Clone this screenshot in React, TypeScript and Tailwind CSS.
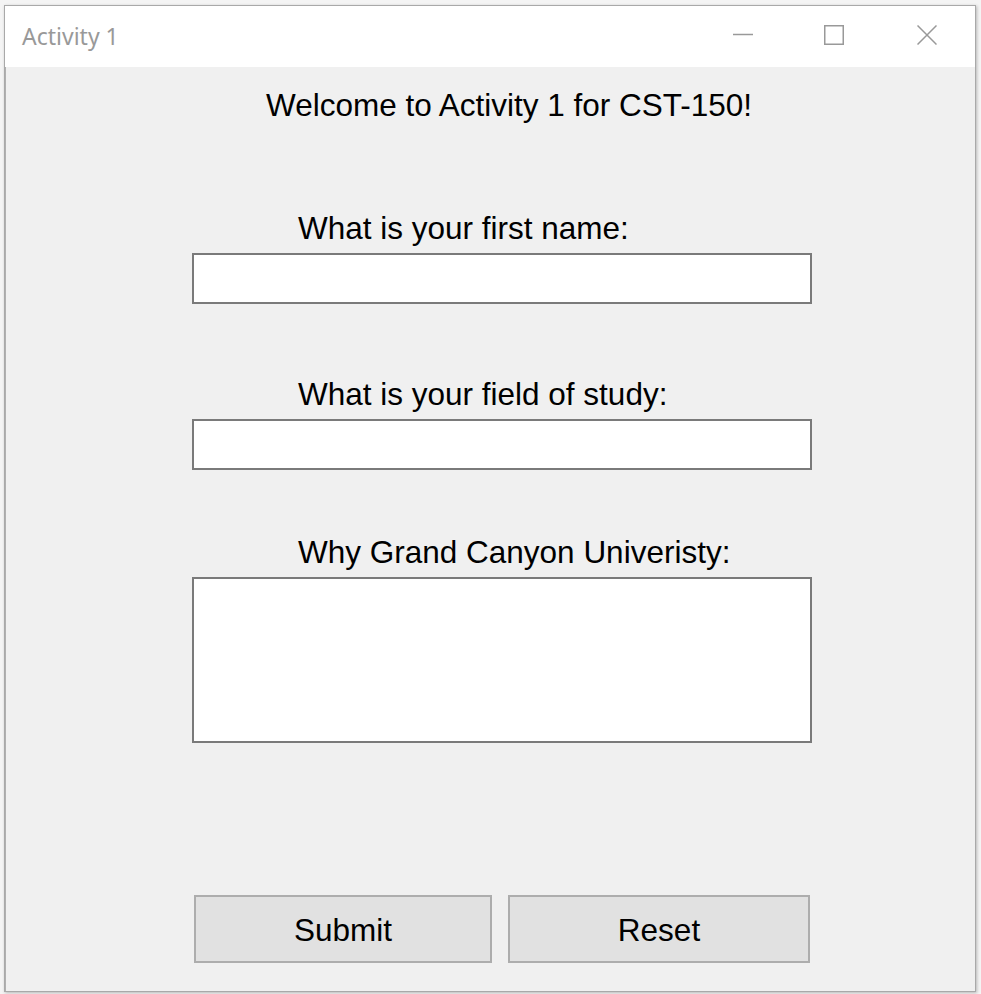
import React from "react";

const label = "block leading-[31px] h-[31px] text-[31.5px] text-[#000] whitespace-nowrap";
const font = { fontFamily: '"Liberation Sans", Arial, sans-serif' };

export default function App() {
  return (
    <div className="min-h-[994px] w-[981px] bg-[#f4f4f4] pt-[5px] pl-[4px]">
      <div className="w-[972px] h-[987px] border border-[#a9a9a9] flex flex-col shadow-[1px_1px_3px_rgba(0,0,0,0.25)]">
        {/* Title bar */}
        <div className="h-[61px] bg-white flex items-start shrink-0">
          <span
            className="mt-[19px] ml-[17px] leading-none text-[23px] text-[#999999]"
            style={{ fontFamily: '"Noto Sans", "Open Sans", sans-serif' }}
          >
            Activity 1
          </span>
          <div className="flex-1" />
          <svg width="20" height="20" viewBox="0 0 20 20" className="mt-[19px]">
            <line x1="0" y1="9.5" x2="20" y2="9.5" stroke="#999" strokeWidth="1.5" />
          </svg>
          <svg width="20" height="20" viewBox="0 0 20 20" className="mt-[19px] ml-[71px]">
            <rect x="0.75" y="0.75" width="18.5" height="18.5" fill="none" stroke="#999" strokeWidth="1.5" />
          </svg>
          <svg width="20" height="20" viewBox="0 0 20 20" className="mt-[19px] ml-[73px] mr-[38px]">
            <path d="M0.5 0.5 L19.5 19.5 M19.5 0.5 L0.5 19.5" stroke="#999" strokeWidth="1.5" />
          </svg>
        </div>
        {/* Body */}
        <div className="flex-1 bg-[#f0f0f0] flex flex-col items-start border-l border-l-[#b0b0b0]" style={font}>
          <span className={`${label} mt-[23px] ml-[260px]`}>Welcome to Activity 1 for CST-150!</span>

          <span className={`${label} mt-[92px] ml-[292px]`}>What is your first name:</span>
          <div className="mt-[9px] ml-[186px] w-[620px] h-[51px] bg-white border-2 border-[#7a7a7a]" />

          <span className={`${label} mt-[75px] ml-[292px]`}>What is your field of study:</span>
          <div className="mt-[9px] ml-[186px] w-[620px] h-[51px] bg-white border-2 border-[#7a7a7a]" />

          <span className={`${label} mt-[67px] ml-[292px]`}>Why Grand Canyon Univeristy:</span>
          <div className="mt-[9px] ml-[186px] w-[620px] h-[166px] bg-white border-2 border-[#7a7a7a]" />

          <div className="mt-[152px] ml-[188px] flex gap-[16px]">
            <div className="w-[298px] h-[68px] bg-[#e1e1e1] border-2 border-[#adadad] flex items-center justify-center pt-[3px]">
              <span className={label}>Submit</span>
            </div>
            <div className="w-[302px] h-[68px] bg-[#e1e1e1] border-2 border-[#adadad] flex items-center justify-center pt-[3px]">
              <span className={label}>Reset</span>
            </div>
          </div>
        </div>
      </div>
    </div>
  );
}
